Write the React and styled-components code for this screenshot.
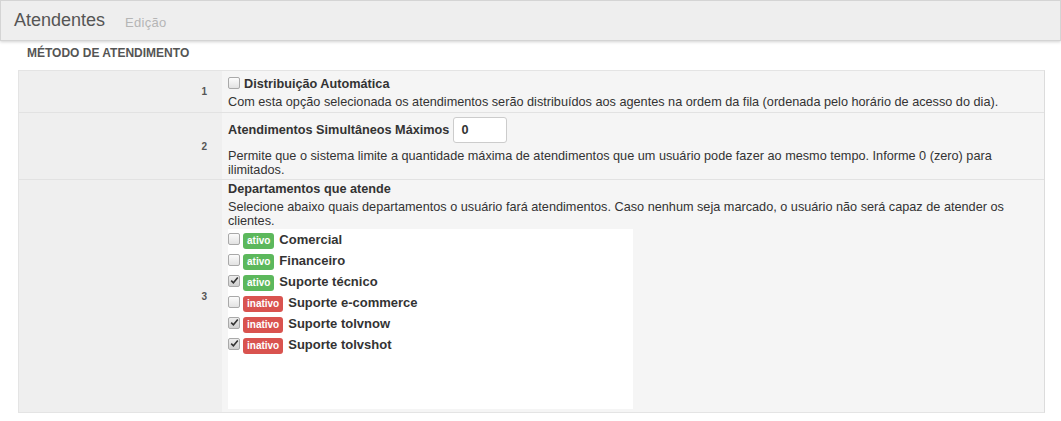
import React from "react";
import styled, { createGlobalStyle } from "styled-components";

const Global = createGlobalStyle`
  html, body { margin: 0; padding: 0; background: #fff; }
  body { font-family: Arial, "Liberation Sans", Helvetica, sans-serif; color: #333; font-size: 12.7px; }
`;

const Header = styled.header`
  height: 39px;
  background: #eeeeee;
  border: 1px solid #d4d4d4;
  box-shadow: 0 1px 3px rgba(0, 0, 0, 0.18);
  display: flex;
  align-items: center;
  padding-left: 13px;
  gap: 20px;
`;

const Title = styled.h1`
  margin: 0;
  font-size: 18px;
  font-weight: normal;
  color: #555;
  line-height: 20px;
  margin-top: -1px;
`;

const SubTitle = styled.span`
  font-size: 13px;
  color: #b5b5b5;
  letter-spacing: 0.3px;
  margin-top: 3px;
`;

const Main = styled.main`
  padding: 0 16px 0 18px;
`;

const SectionTitle = styled.h2`
  margin: 0;
  padding: 5px 0 0 9px;
  height: 24px;
  font-size: 12px;
  line-height: 14px;
  font-weight: bold;
  color: #555;
`;

const Table = styled.div`
  border: 1px solid #e4e4e4;
  border-right-color: #dcdcdc;
`;

const Row = styled.div`
  display: grid;
  grid-template-columns: 203px 1fr;
  & + & {
    border-top: 1px solid #e2e2e2;
  }
`;

const NumCell = styled.div`
  background: #efefef;
  display: flex;
  align-items: center;
  justify-content: flex-end;
  padding-right: 15px;
  font-size: 10px;
  font-weight: bold;
  color: #555;
`;

const Content = styled.div`
  background: #f5f5f5;
  display: flex;
  flex-direction: column;
  padding: ${(p) => p.$pt}px 12px ${(p) => p.$pb}px 6px;
`;

const LabelLine = styled.div`
  display: flex;
  align-items: center;
  height: ${(p) => p.$h || 18}px;
  font-weight: bold;
  font-size: 12.7px;
  color: #333;
  gap: ${(p) => p.$gap || 0}px;
`;

const Desc = styled.p`
  margin: ${(p) => p.$mt}px 0 0;
  font-size: 12.7px;
  line-height: 14px;
  color: #333;
`;

const Box = styled.span`
  width: 10px;
  height: 10px;
  border: 1px solid #a9a9a9;
  border-radius: 2px;
  background: ${(p) => (p.$checked ? "linear-gradient(#eeeeee, #cfcfcf)" : "linear-gradient(#fcfcfc, #e2e2e2)")};
  display: inline-flex;
  align-items: center;
  justify-content: center;
  flex: none;
  margin-right: ${(p) => p.$mr}px;
  margin-top: ${(p) => p.$mt || 0}px;
`;

const NumberInput = styled.input`
  width: 54px;
  height: 26px;
  box-sizing: border-box;
  border: 1px solid #ccc;
  border-radius: 3px;
  background: #fff;
  padding: 0 7px;
  font-family: inherit;
  font-size: 12.7px;
  font-weight: bold;
  color: #333;
  outline: none;
`;

const List = styled.div`
  margin-top: 1px;
  width: 405px;
  height: 180px;
  background: #fff;
  display: flex;
  flex-direction: column;
`;

const Item = styled.div`
  height: 21px;
  display: flex;
  align-items: center;
  font-weight: bold;
  font-size: 13px;
  color: #333;
`;

const Badge = styled.span`
  display: inline-block;
  height: 16px;
  line-height: 16px;
  padding: 0 4px;
  border-radius: 3px;
  font-size: 10px;
  font-weight: bold;
  color: #fff;
  background: ${(p) => (p.$active ? "#5cb85c" : "#d9534f")};
  margin-right: 5px;
  margin-top: 2px;
`;

const Check = ({ checked, mr = 4, mt }) => (
  <Box $mr={mr} $mt={mt} $checked={checked}>
    {checked && (
      <svg width="9" height="9" viewBox="0 0 9 9">
        <path d="M1.2 4.6 L3.4 6.8 L7.8 1.4" fill="none" stroke="#333" strokeWidth="1.6" />
      </svg>
    )}
  </Box>
);

const departments = [
  { name: "Comercial", active: true, checked: false },
  { name: "Financeiro", active: true, checked: false },
  { name: "Suporte técnico", active: true, checked: true },
  { name: "Suporte e-commerce", active: false, checked: false },
  { name: "Suporte tolvnow", active: false, checked: true },
  { name: "Suporte tolvshot", active: false, checked: true },
];

export default function App() {
  return (
    <>
      <Global />
      <Header>
        <Title>Atendentes</Title>
        <SubTitle>Edição</SubTitle>
      </Header>
      <Main>
        <SectionTitle>MÉTODO DE ATENDIMENTO</SectionTitle>
        <Table>
          <Row>
            <NumCell>1</NumCell>
            <Content $pt={4} $pb={3}>
              <LabelLine>
                <Check mr={4} mt={-2} />
                Distribuição Automática
              </LabelLine>
              <Desc $mt={2}>
                Com esta opção selecionada os atendimentos serão distribuídos aos agentes na ordem da fila (ordenada pelo horário de acesso do dia).
              </Desc>
            </Content>
          </Row>
          <Row>
            <NumCell>2</NumCell>
            <Content $pt={4} $pb={2}>
              <LabelLine $h={26} $gap={4}>
                Atendimentos Simultâneos Máximos
                <NumberInput type="text" defaultValue="0" />
              </LabelLine>
              <Desc $mt={6}>
                Permite que o sistema limite a quantidade máxima de atendimentos que um usuário pode fazer ao mesmo tempo. Informe 0 (zero) para ilimitados.
              </Desc>
            </Content>
          </Row>
          <Row>
            <NumCell>3</NumCell>
            <Content $pt={0} $pb={3}>
              <LabelLine>Departamentos que atende</LabelLine>
              <Desc $mt={2}>
                Selecione abaixo quais departamentos o usuário fará atendimentos. Caso nenhum seja marcado, o usuário não será capaz de atender os clientes.
              </Desc>
              <List>
                {departments.map((d) => (
                  <Item key={d.name}>
                    <Check checked={d.checked} mr={3} mt={-2} />
                    <Badge $active={d.active}>{d.active ? "ativo" : "inativo"}</Badge>
                    {d.name}
                  </Item>
                ))}
              </List>
            </Content>
          </Row>
        </Table>
      </Main>
    </>
  );
}
